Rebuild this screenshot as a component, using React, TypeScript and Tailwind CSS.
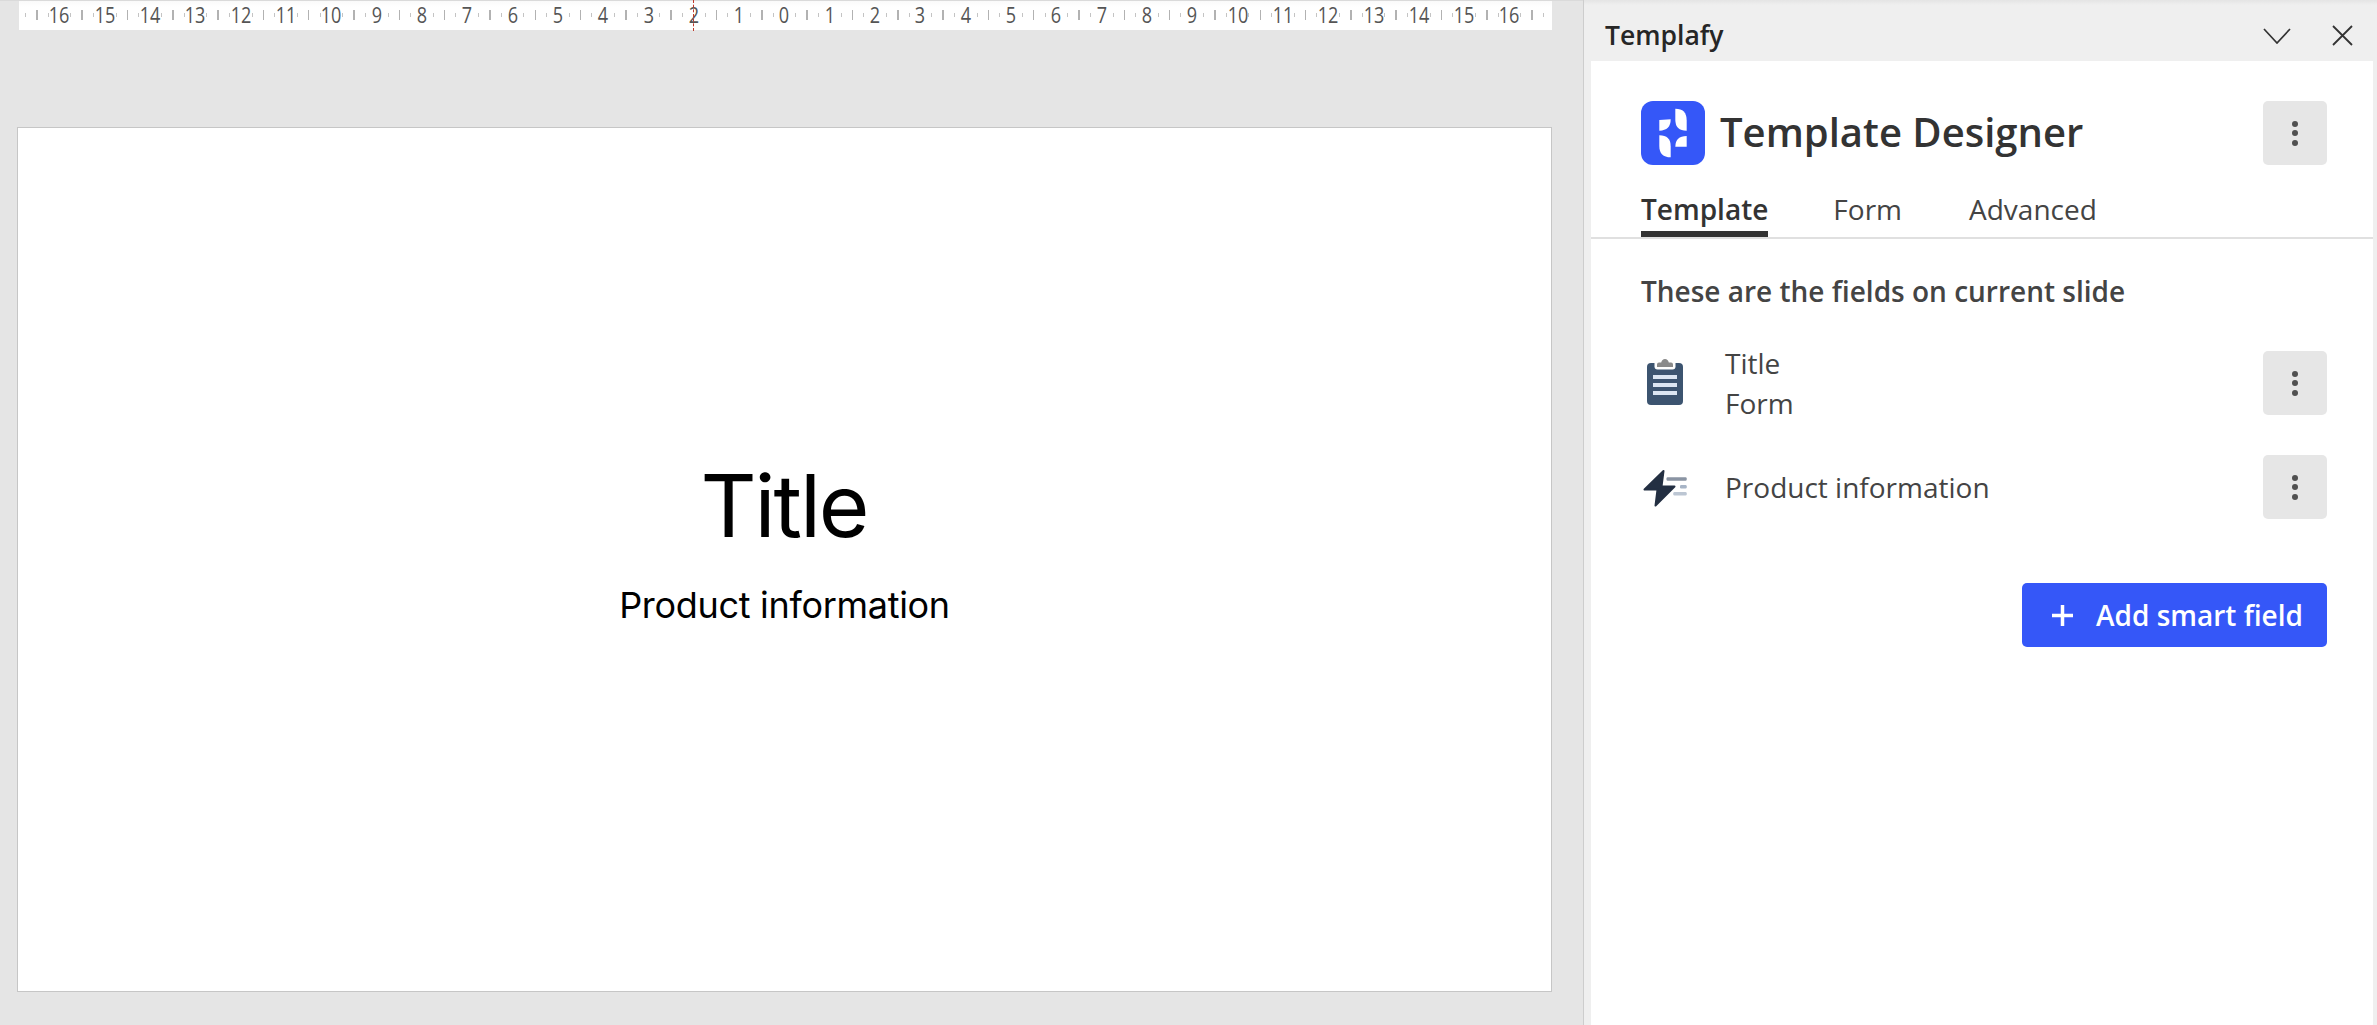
import React from "react";

const quarters = Array.from({ length: 135 }, (_, k) => k - 67);

function RulerMark({ q }: { q: number }) {
  const isNumber = q % 4 === 0;
  const isHalf = !isNumber && q % 2 === 0;
  return (
    <div className="relative flex h-full w-[11.333px] shrink-0 items-center justify-center">
      {isNumber && (
        <span className="text-[21px] leading-none text-[#555555] [font-family:'Open_Sans',sans-serif] scale-x-[0.86]">
          {Math.abs(q) / 4}
        </span>
      )}
      {isHalf && <span className="mb-px h-[10px] w-[1.5px] shrink-0 bg-[#b2b2b2]" />}
      {!isNumber && !isHalf && <span className="mb-px h-[4px] w-px shrink-0 bg-[#c4c4c4]" />}
      {q === -8 && (
        <span className="absolute left-[calc(50%-1px)] top-[-1px] h-[31px] border-l border-dashed border-[#c0392b]" />
      )}
    </div>
  );
}

function MoreButton() {
  return (
    <button className="flex h-[64px] w-[64px] shrink-0 flex-col items-center justify-center gap-[3.5px] rounded-[5px] bg-[#e6e6e6]">
      <span className="h-[6px] w-[6px] rounded-full bg-[#505050]" />
      <span className="h-[6px] w-[6px] rounded-full bg-[#505050]" />
      <span className="h-[6px] w-[6px] rounded-full bg-[#505050]" />
    </button>
  );
}

function Logo() {
  return (
    <svg width="64" height="64" viewBox="33 33 192 192" className="shrink-0">
      <rect x="33" y="33" width="192" height="192" rx="36" fill="#3557f8" />
      <path d="M136 56Q170 56 170 90L170 122Q136 122 136 90Z" fill="#fff" />
      <path d="M122 202Q88 202 88 168L88 136Q122 136 122 168Z" fill="#fff" />
      <path d="M88 90L122 88Q122 122 88 122Z" fill="#fff" />
      <path d="M170 138L170 170L136 170Q136 138 170 138Z" fill="#fff" />
    </svg>
  );
}

function ClipboardIcon() {
  return (
    <svg width="48" height="48" viewBox="0 1 48 48" className="shrink-0">
      <rect x="6" y="5" width="36" height="42" rx="4" fill="#3c5470" />
      <rect x="13.5" y="2" width="21" height="9.5" rx="3" fill="#fff" />
      <path d="M16 9V6.5Q16 4.5 18 4.5H20.2Q21 1 24 1Q27 1 27.8 4.5H30Q32 4.5 32 6.5V9Z" fill="#8a8a8a" />
      <rect x="12" y="17" width="24" height="4" fill="#dbe5f2" />
      <rect x="12" y="25" width="24" height="4" fill="#dbe5f2" />
      <rect x="12" y="33" width="24" height="4" fill="#dbe5f2" />
    </svg>
  );
}

function BoltIcon() {
  return (
    <svg width="48" height="48" viewBox="0 0 48 48" className="shrink-0">
      <path
        d="M22.5 8L3.5 26.5H16.5L14.5 42.5L33.5 23.5H20.5Z"
        fill="#232f42"
        stroke="#232f42"
        strokeWidth="2"
        strokeLinejoin="round"
      />
      <rect x="25.5" y="14.3" width="20.2" height="3.4" rx="1.2" fill="#8a94a3" />
      <rect x="39" y="22" width="6.7" height="3.4" rx="1.2" fill="#a7b4c6" />
      <rect x="32.3" y="29" width="13.4" height="3.4" rx="1.2" fill="#bcc6d3" />
    </svg>
  );
}

export default function App() {
  return (
    <div className="flex h-[1025px] w-[2377px] overflow-hidden bg-[#e5e5e5] [font-family:'Open_Sans',sans-serif]">
      <div className="flex w-[1583px] shrink-0 flex-col border-t border-[#dadada]">
        <div className="ml-[19px] flex h-[29px] w-[1533px] shrink-0 justify-center bg-[linear-gradient(#fafafa,#ffffff_20%)] pr-[2px]">
          {quarters.map((q) => (
            <RulerMark key={q} q={q} />
          ))}
        </div>
        <div className="ml-[17px] mt-[97px] flex h-[865px] w-[1535px] shrink-0 flex-col items-center border border-[#c6c6c6] bg-white pt-[328px] text-black [font-family:Inter,sans-serif]">
          <div className="pr-[1px] text-[87px] leading-[100px] tracking-[-2.1px]">Title</div>
          <div className="mt-[24px] text-[36px] leading-[50px] tracking-[-0.3px]">Product information</div>
        </div>
      </div>

      <div className="h-full w-px shrink-0 bg-[#cdcdcd]" />

      <div className="flex h-full min-w-0 flex-1 flex-col bg-[#efefef]">
        <div className="flex h-[61px] shrink-0 items-center justify-between bg-[linear-gradient(#e4e4e4,#efefef_5px)] pl-[21px] pr-[24px] pt-[10px]">
          <div className="text-[26.5px] font-semibold leading-none text-[#262626]">Templafy</div>
          <div className="flex items-center gap-[41px]">
            <svg width="28" height="16" viewBox="0 0 28 16" fill="none" stroke="#333" strokeWidth="1.7">
              <path d="M1 1L14 15L27 1" />
            </svg>
            <svg width="21" height="21" viewBox="0 0 21 21" fill="none" stroke="#333" strokeWidth="1.8">
              <path d="M1 1L20 20M20 1L1 20" />
            </svg>
          </div>
        </div>

        <div className="ml-[7px] mr-[4px] flex min-h-0 flex-1 flex-col bg-white text-[#3d3d3d]">
          <div className="mt-[40px] flex items-center justify-between pl-[50px] pr-[46px]">
            <div className="flex items-center gap-[15px]">
              <Logo />
              <div className="pb-[2px] text-[40px] font-semibold leading-none text-[#333]">Template Designer</div>
            </div>
            <MoreButton />
          </div>

          <div className="mt-[24px] flex gap-[65px] border-b-2 border-[#e0e0e0] pl-[50px]">
            <div className="border-b-[6px] border-[#333] pb-[2px] text-[28px] font-semibold leading-[40px] text-[#333]">Template</div>
            <div className="text-[28px] leading-[40px] text-[#444]">Form</div>
            <div className="ml-[2px] text-[28px] leading-[40px] text-[#444]">Advanced</div>
          </div>

          <div className="mt-[32px] pl-[50px] text-[28px] font-semibold leading-[40px] text-[#444]">
            These are the fields on current slide
          </div>

          <div className="mt-[32px] flex h-[80px] items-center justify-between pl-[50px] pr-[46px]">
            <div className="flex items-center">
              <div className="w-[84px]">
                <ClipboardIcon />
              </div>
              <div className="text-[28px] leading-[40px] text-[#444]">
                <div>Title</div>
                <div>Form</div>
              </div>
            </div>
            <MoreButton />
          </div>

          <div className="mt-[32px] flex h-[64px] items-center justify-between pl-[50px] pr-[46px]">
            <div className="flex items-center">
              <div className="w-[84px]">
                <BoltIcon />
              </div>
              <div className="text-[28px] leading-[40px] text-[#444]">Product information</div>
            </div>
            <MoreButton />
          </div>

          <div className="mt-[64px] flex justify-end pr-[46px]">
            <button className="flex h-[64px] w-[305px] items-center gap-[23px] rounded-[5px] bg-[#3557f8] pl-[30px] text-[28px] font-semibold leading-none text-white">
              <svg width="21" height="21" viewBox="0 0 21 21" fill="#fff" className="shrink-0">
                <rect x="8.75" y="0" width="3.5" height="21" />
                <rect x="0" y="8.75" width="21" height="3.5" />
              </svg>
              Add smart field
            </button>
          </div>
        </div>
      </div>
    </div>
  );
}
